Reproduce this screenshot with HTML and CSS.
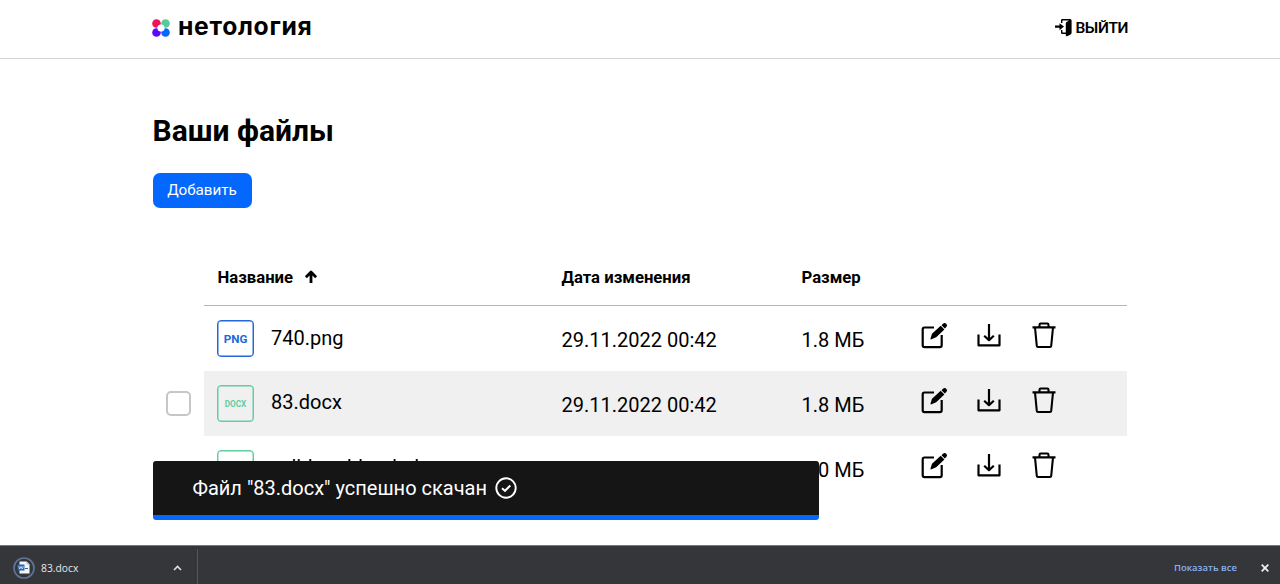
FILE: index.html
```html
<!DOCTYPE html>
<html lang="ru">
<head>
<meta charset="utf-8">
<title>Ваши файлы</title>
<link rel="stylesheet" href="styles.css">
</head>
<body>
<svg class="sprite" width="0" height="0">
  <symbol id="edit" viewBox="0 0 28 28">
    <path d="M14 5.500H4.500q-1.800 0-1.800 1.800V23.300q0 1.900 1.800 1.900h15.400q1.800 0 1.800-1.900V13" fill="none" stroke="currentColor" stroke-width="2.200"/>
    <path d="M10.500 16.500l1.500-4.700 8.700-8 3.700 3.700-8.200 7.700-4.700 2.100q-1.200.4-1-.8z" fill="currentColor"/>
    <path d="M21.500 3.200l1.500-1.500a2.300 2.300 0 0 1 3.300 3.300l-1.500 1.500z" fill="currentColor"/>
  </symbol>
  <symbol id="download" viewBox="0 0 28 28">
    <path d="M3.500 12.500v10.800h21V12.500M14 2v15.500M9.200 13.700l4.800 4.500 4.800-4.500" fill="none" stroke="currentColor" stroke-width="2.200" stroke-linejoin="round"/>
  </symbol>
  <symbol id="trash" viewBox="0 0 28 28">
    <path d="M2.500 5.400h23M5 5.500l1.800 18.500q.1 1 1.200 1h12q1.100 0 1.200-1L23 5.500M9.500 5V2.700q0-1.200 1.200-1.200h6.600q1.200 0 1.200 1.200V5" fill="none" stroke="currentColor" stroke-width="2.100"/>
  </symbol>
</svg>
<div class="app">
  <header class="header">
    <div class="logo">
      <svg width="18" height="18" viewBox="0 0 18 18"><circle cx="4.500" cy="4.500" r="4.300" fill="#ed145b"/><circle cx="13.500" cy="4.500" r="4.300" fill="#55ca9b"/><circle cx="4.500" cy="13.500" r="4.300" fill="#5a0aff"/><circle cx="13.500" cy="13.500" r="4.300" fill="#0468ff"/><circle cx="9" cy="9" r="3.600" fill="#fff"/></svg>
      <span class="brand">нетология</span>
    </div>
    <a class="logout">
      <svg width="18" height="19" viewBox="0 0 18 19"><path d="M6 5V2.200Q6 1 7.200 1H15q1.600 0 1.600 1.600v12.200q0 1.200-1 1.600L12 18.300q-1.200.3-1.200-1V16H7.200Q6 16 6 14.800V12h1.400v2.600h3.400V5.200q0-.9.800-1.300L14 2.500H7.400V5z"/><path d="M0 7.500h4.500V5.200l4.500 3.400-4.500 3.600V9.700H0z"/></svg>
      <span>ВЫЙТИ</span>
    </a>
  </header>
  <main class="main">
    <h1 class="title">Ваши файлы</h1>
    <button class="add">Добавить</button>
    <div class="table">
      <div class="row head">
        <div class="name">Название<svg class="arrow" width="14" height="14" viewBox="0 0 14 14"><path d="M7 13V2.500M1.900 7.200L7 2.100 12.100 7.200" fill="none" stroke="#000" stroke-width="2.800" stroke-linejoin="round"/></svg></div>
        <div>Дата изменения</div><div>Размер</div>
      </div>
      <div class="line"><div class="row">
        <div class="name"><span class="type png">PNG</span><span class="file">740.png</span></div>
        <div class="cell">29.11.2022 00:42</div><div class="cell">1.8 МБ</div>
        <div class="actions"><svg><use href="#edit"/></svg><svg><use href="#download"/></svg><svg><use href="#trash"/></svg></div>
      </div></div>
      <div class="line checked"><span class="check"></span><div class="row active">
        <div class="name"><span class="type docx">DOCX</span><span class="file raised">83.docx</span></div>
        <div class="cell">29.11.2022 00:42</div><div class="cell">1.8 МБ</div>
        <div class="actions"><svg><use href="#edit"/></svg><svg><use href="#download"/></svg><svg><use href="#trash"/></svg></div>
      </div></div>
      <div class="line"><div class="row">
        <div class="name"><span class="type docx">DOCX</span><span class="file raised">valid_webbook.docx</span></div>
        <div class="cell">29.11.2022 00:42</div><div class="cell">0.0 МБ</div>
        <div class="actions"><svg><use href="#edit"/></svg><svg><use href="#download"/></svg><svg><use href="#trash"/></svg></div>
      </div></div>
    </div>
  </main>
  <div class="toast"><span>Файл "83.docx" успешно скачан</span><svg width="22" height="22" viewBox="0 0 22 22"><path d="M7 11.300l3 2.500 5.300-5.300" fill="none" stroke="#fff" stroke-width="2"/><circle cx="11" cy="11" r="9.700" fill="none" stroke="#fff" stroke-width="1.900"/></svg></div>
  <footer class="shelf">
    <div class="item">
      <svg width="22" height="22" viewBox="0 0 22 22"><circle cx="11" cy="11" r="10" fill="none" stroke="#5e7396" stroke-width="1.700"/><path d="M6.500 4.500h7l3 3v9h-10z" fill="#f3f5f9"/><path d="M13.500 4.500v3h3z" fill="#b9c6da"/><path d="M4.500 7.500h7v6h-7z" fill="#2465b8"/><path d="M5.700 9l1 3L8 9.500 9.300 12l1-3" fill="none" stroke="#fff" stroke-width=".7"/><path d="M12 11.500h3" stroke="#2465b8"/></svg>
      <span class="saved">83.docx</span>
      <svg class="chevron" width="9" height="6" viewBox="0 0 9 6"><path d="M1 5l3.500-3.500L8 5" fill="none" stroke="#dedfe1" stroke-width="1.600"/></svg>
    </div>
    <span class="all">Показать все</span>
    <svg class="close" width="8" height="8" viewBox="0 0 8 8"><path d="M.7.7l6.600 6.600M7.300.7L.7 7.300" stroke="#f1f1f1" stroke-width="1.700"/></svg>
  </footer>
</div>
</body>
</html>
```
FILE: styles.css
```css
* { box-sizing: border-box; }
body { margin: 0; background: #fff; color: #000; font-family: Roboto, sans-serif; }
.sprite { position: absolute; }
.app { position: relative; height: 584px; overflow: hidden; display: flex; flex-direction: column; }
.header { height: 59px; flex: none; padding: 0 152px; border-bottom: 1px solid #d5d5d5; display: flex; justify-content: space-between; }
.logo { display: flex; gap: 8px; padding-top: 19px; }
.brand { font: 700 24.700px/28px Inter, sans-serif; letter-spacing: .7px; margin-top: -7px; }
.logout { display: flex; gap: 2px; padding-top: 18px; font-size: 15.500px; font-weight: 600; letter-spacing: -.4px; line-height: 20px; }
.main { flex: 1; min-height: 0; padding: 53px 153px 0 152.500px; }
.title { margin: 0; font-size: 30px; line-height: 38px; font-weight: 700; }
.add { display: block; width: 99px; height: 35px; margin-top: 22.500px; padding: 0; border: 0; border-radius: 7px; background: #0468ff; color: #fff; font: 15.200px Roboto, sans-serif; }
.table { margin: 41.500px 0 0 51.500px; }
.row { width: 923px; height: 65px; padding-left: 13px; display: grid; grid-template-columns: 344.500px 240px 118.500px 1fr; align-items: center; font-size: 20px; }
.head { height: 57px; border-bottom: 1px solid #b5b5b5; padding-left: 13.500px; font-size: 16.700px; font-weight: 700; grid-template-columns: 344px 240px 119px 1fr; }
.name { display: flex; align-items: center; }
.arrow { margin-left: 11px; }
.line { display: flex; height: 65px; margin-left: -38px; padding-left: 38px; }
.checked { padding-left: 0; }
.check { width: 25px; height: 25px; margin: 20px 13px 0 0; flex: none; border: 2px solid #c6c6c6; border-radius: 5px; background: #fff; }
.active { background: #f0f0f0; }
.type { width: 37px; height: 37px; margin-right: 17px; border: 1.500px solid; box-shadow: inset 0 0 0 .5px currentColor; border-radius: 4px; display: flex; align-items: center; justify-content: center; font-weight: 700; padding-top: 1px; }
.png { color: #2468d9; font-size: 11.700px; }
.docx { color: #63cca0; font-size: 8.200px; }
.file { margin-top: -2px; }
.file.raised { margin-top: -4px; }
.cell { padding-top: 2px; }
.actions { display: flex; gap: 27px; }
.actions svg { width: 28px; height: 28px; flex: none; margin-top: -5px; }
.toast { position: absolute; left: 152.500px; top: 460.500px; width: 666.500px; height: 59.500px; padding: 0 40px; border-bottom: 5px solid #0468ff; border-radius: 3px; background: #151515; color: #fff; display: flex; align-items: center; gap: 8px; font-size: 20px; }
.shelf { height: 39px; flex: none; background: #35363a; border-top: 1px solid #77787b; display: flex; align-items: center; padding-top: 7px; font: 10.300px "Open Sans", sans-serif; color: #e8e8e8; }
.item { width: 197.500px; height: 38px; margin-top: -1px; display: flex; align-items: center; padding-left: 13px; border-right: 1px solid #56575b; }
.saved { margin-left: 6px; }
.chevron { margin-left: auto; margin-right: 15px; }
.all { margin-left: auto; color: #8ab0f4; font-size: 9.500px; font-weight: 600; margin-top: -2px; }
.close { margin: -1px 11px 0 24px; }
```
